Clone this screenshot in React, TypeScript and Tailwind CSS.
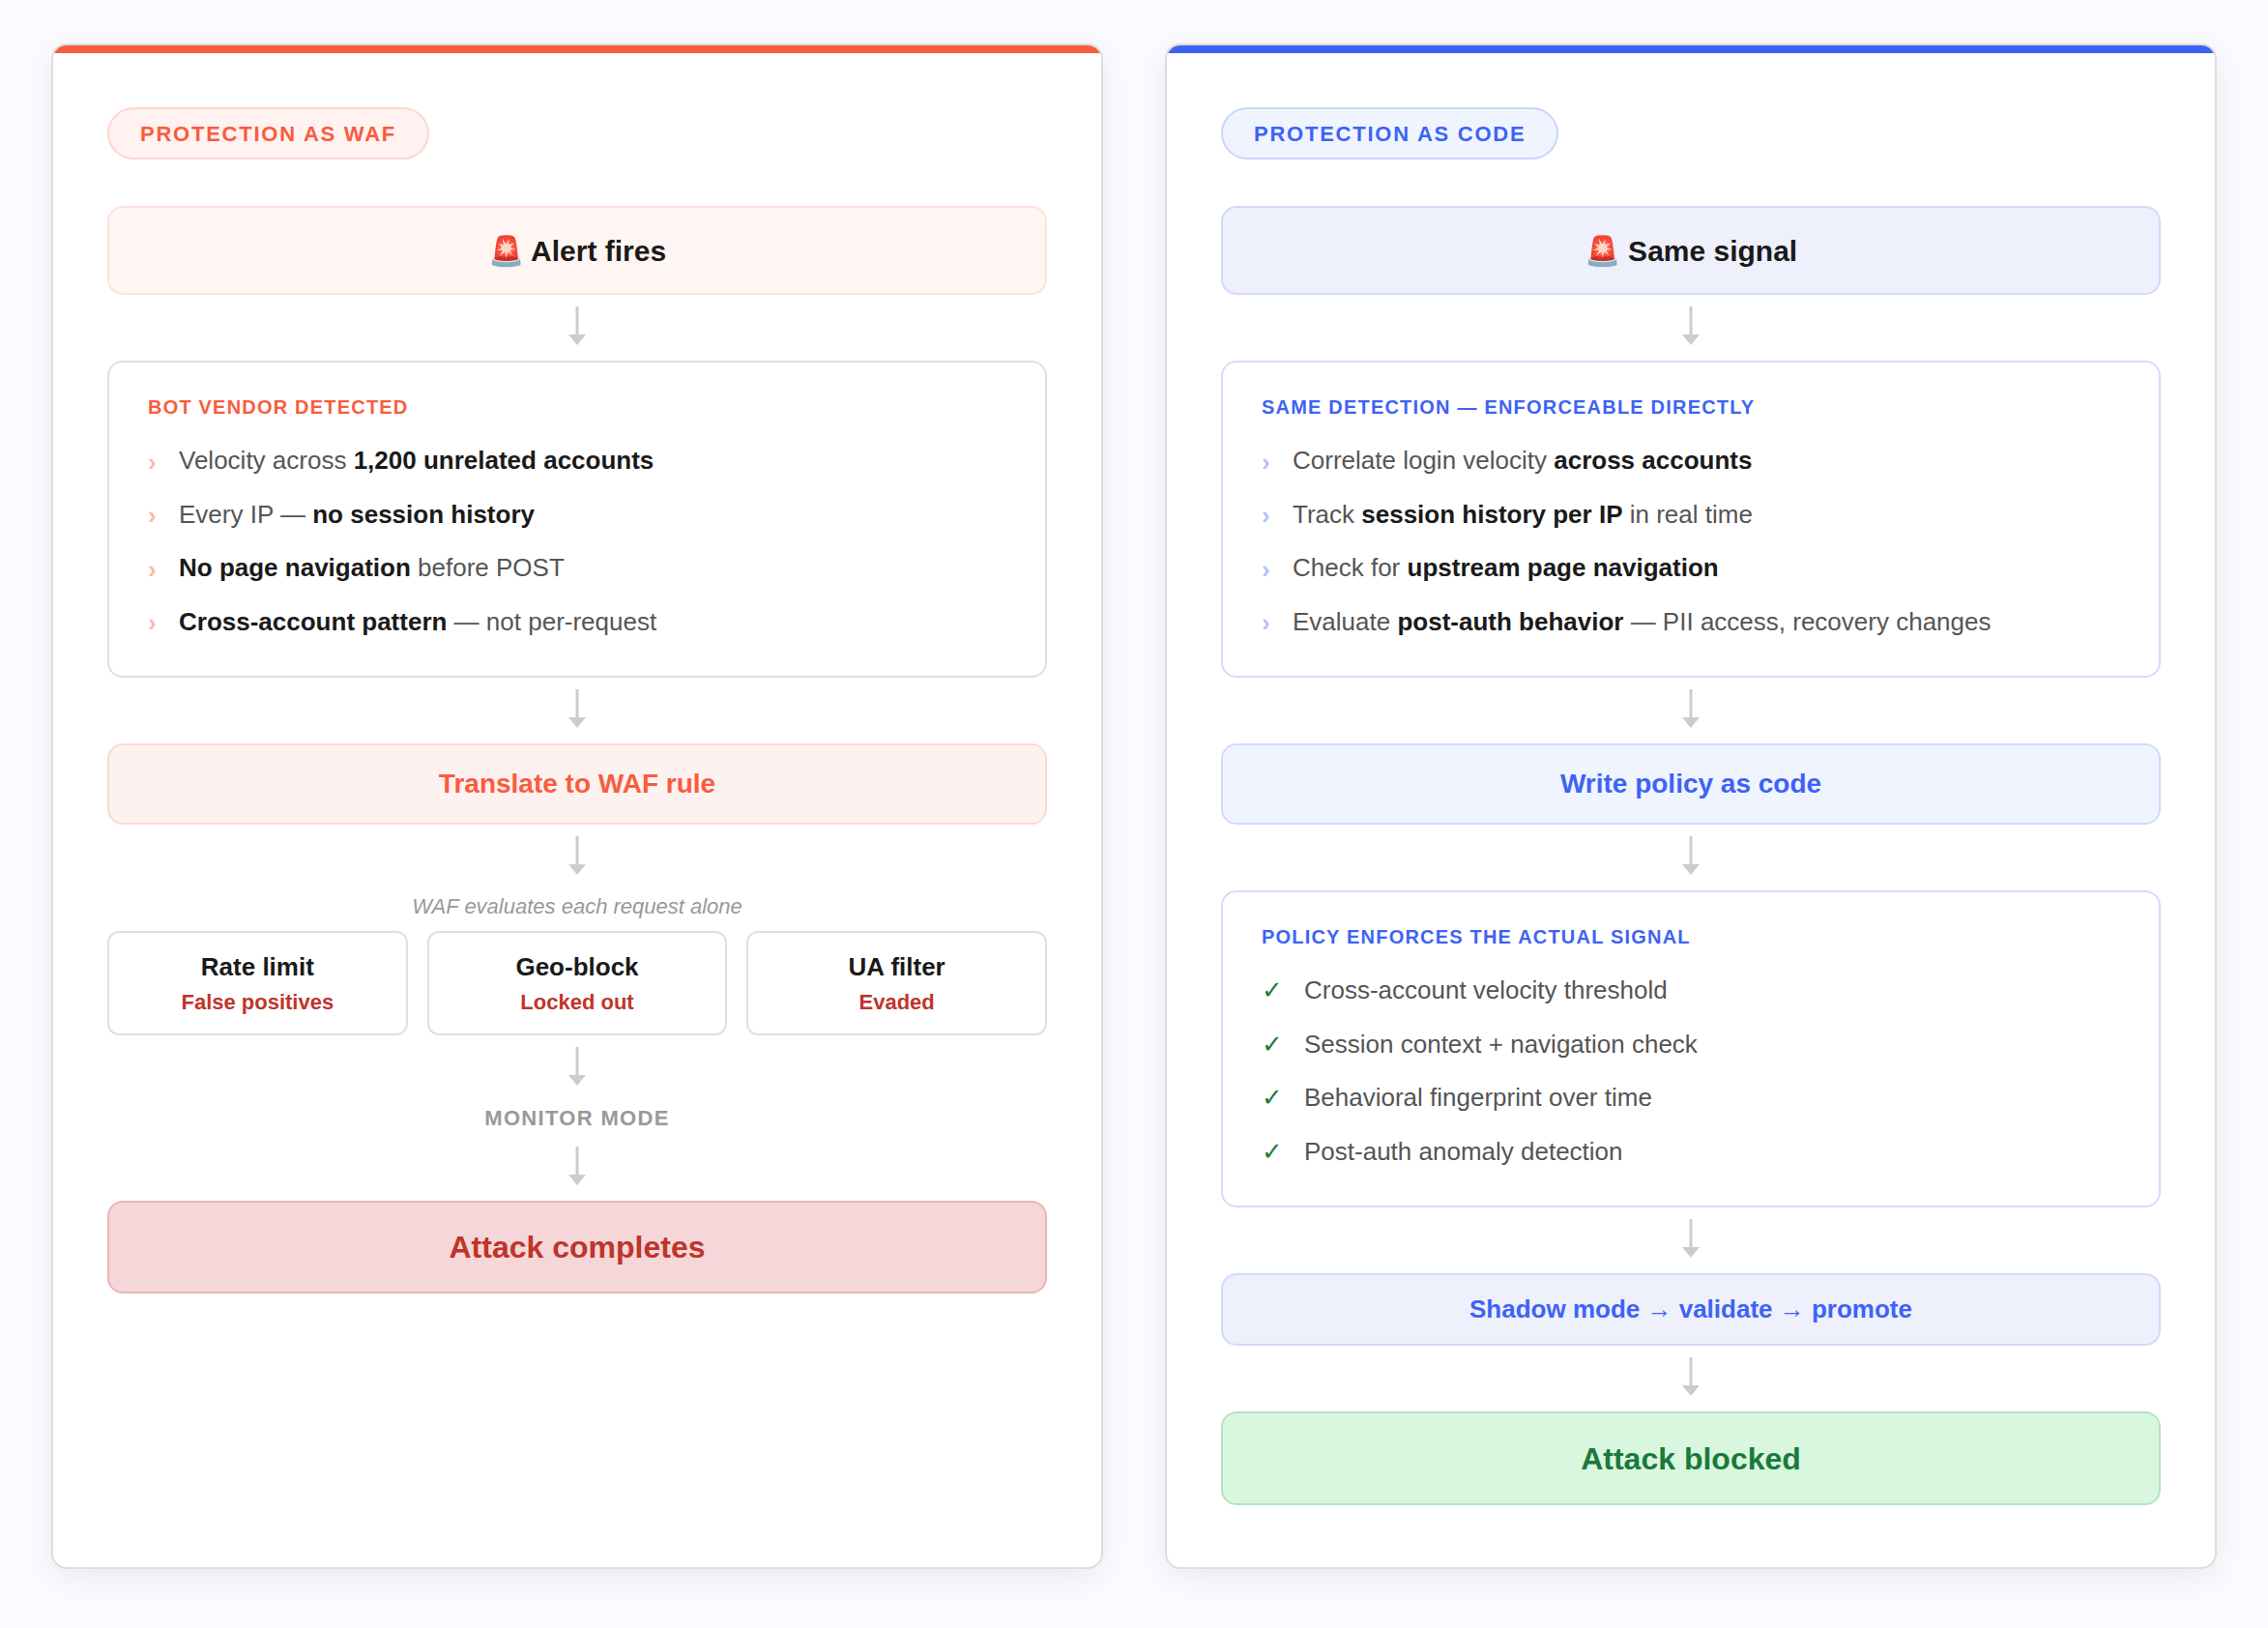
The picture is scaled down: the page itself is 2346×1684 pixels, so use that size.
import type { ReactNode } from "react";

function Arrow() {
  return (
    <svg width="18" height="40" viewBox="0 0 18 40" className="mt-[12px] mb-[16px] shrink-0 self-center">
      <rect x="7.5" y="0" width="3" height="30" fill="#cccccc" />
      <path d="M0 29h18l-9 11z" fill="#cccccc" />
    </svg>
  );
}

function Item({ children, chevron }: { children: ReactNode; chevron: string }) {
  return (
    <li className="flex h-[55.5px] items-center text-[26px] text-[#555555]">
      <span className={`w-[32px] shrink-0 pt-[3px] font-bold ${chevron}`}>›</span>
      <span>{children}</span>
    </li>
  );
}

function B({ children }: { children: ReactNode }) {
  return <strong className="font-bold text-[#1a1a1a]">{children}</strong>;
}

function Check({ children }: { children: ReactNode }) {
  return (
    <li className="flex h-[55.5px] items-center text-[26px] text-[#555555]">
      <span className="w-[44px] shrink-0 text-[#1a7a3a]">✓</span>
      <span>{children}</span>
    </li>
  );
}

function WafOption({ name, result }: { name: string; result: string }) {
  return (
    <div className="flex h-[108px] flex-col items-center justify-center rounded-[12px] border-2 border-[#e0e0e0] bg-white">
      <div className="text-[26px] leading-[36px] font-bold text-[#1a1a1a]">{name}</div>
      <div className="mt-[4px] text-[22px] leading-[30px] font-bold text-[#c0342a]">{result}</div>
    </div>
  );
}

export default function App() {
  return (
    <div className="min-h-[1684px] bg-[#fafbff] px-[53px] pt-[45px] pb-[62px] font-['Liberation_Sans',sans-serif]">
      <div className="grid grid-cols-2 gap-[64px]">
        {/* left: WAF */}
        <section className="relative flex h-[1578px] flex-col overflow-hidden rounded-[16px] border-2 border-[#dddddd] bg-white px-[56px] pt-[64px] shadow-[0_8px_32px_rgba(0,0,0,0.07)]">
          <div className="absolute inset-x-0 top-0 h-[8px] bg-[#f95c3d]" />
          <div className="mb-[48px] flex h-[54px] items-center self-start rounded-full border-2 border-[#fdd5cf] bg-[#fff2f0] px-[32px] text-[22px] font-bold tracking-[0.08em] text-[#f95c3d]">
            PROTECTION AS WAF
          </div>
          <div className="flex h-[92px] items-center justify-center rounded-[16px] border-2 border-[#ffe1dc] bg-[#fff5f3] text-[30px] font-bold whitespace-pre text-[#1a1a1a]">
            🚨 Alert fires
          </div>
          <Arrow />
          <div className="h-[328px] rounded-[16px] border-2 border-[#e0e0e0] bg-white px-[40px] pt-[32px]">
            <div className="mb-[14px] text-[20px] leading-[28px] font-bold tracking-[0.06em] text-[#f95c3d]">BOT VENDOR DETECTED</div>
            <ul>
              <Item chevron="text-[#fbb9ac]">Velocity across <B>1,200 unrelated accounts</B></Item>
              <Item chevron="text-[#fbb9ac]">Every IP — <B>no session history</B></Item>
              <Item chevron="text-[#fbb9ac]"><B>No page navigation</B> before POST</Item>
              <Item chevron="text-[#fbb9ac]"><B>Cross-account pattern</B> — not per-request</Item>
            </ul>
          </div>
          <Arrow />
          <div className="flex h-[84px] items-center justify-center rounded-[16px] border-2 border-[#fdd9d3] bg-[#fef2f0] text-[28px] font-bold text-[#f95c3d]">
            Translate to WAF rule
          </div>
          <Arrow />
          <p className="mb-[8px] text-center text-[22px] leading-[34px] text-[#999999] italic">WAF evaluates each request alone</p>
          <div className="grid grid-cols-3 gap-[20px]">
            <WafOption name="Rate limit" result="False positives" />
            <WafOption name="Geo-block" result="Locked out" />
            <WafOption name="UA filter" result="Evaded" />
          </div>
          <Arrow />
          <p className="text-center text-[22px] leading-[35px] font-bold tracking-[0.06em] text-[#999999]">MONITOR MODE</p>
          <Arrow />
          <div className="flex h-[96px] items-center justify-center rounded-[16px] border-2 border-[#eeb4b4] bg-[#f5d7d9] text-[32px] font-bold text-[#c0342a]">
            Attack completes
          </div>
        </section>

        {/* right: code */}
        <section className="relative flex h-[1578px] flex-col overflow-hidden rounded-[16px] border-2 border-[#dddddd] bg-white px-[56px] pt-[64px] shadow-[0_8px_32px_rgba(0,0,0,0.07)]">
          <div className="absolute inset-x-0 top-0 h-[8px] bg-[#3d63f5]" />
          <div className="mb-[48px] flex h-[54px] items-center self-start rounded-full border-2 border-[#c9d6fb] bg-[#f0f4ff] px-[32px] text-[22px] font-bold tracking-[0.08em] text-[#3d63f5]">
            PROTECTION AS CODE
          </div>
          <div className="flex h-[92px] items-center justify-center rounded-[16px] border-2 border-[#d3dafa] bg-[#eef0fc] text-[30px] font-bold whitespace-pre text-[#1a1a1a]">
            🚨 Same signal
          </div>
          <Arrow />
          <div className="h-[328px] rounded-[16px] border-2 border-[#d3dcfa] bg-white px-[40px] pt-[32px]">
            <div className="mb-[14px] text-[20px] leading-[28px] font-bold tracking-[0.06em] text-[#3d63f5]">SAME DETECTION — ENFORCEABLE DIRECTLY</div>
            <ul>
              <Item chevron="text-[#b4c3f8]">Correlate login velocity <B>across accounts</B></Item>
              <Item chevron="text-[#b4c3f8]">Track <B>session history per IP</B> in real time</Item>
              <Item chevron="text-[#b4c3f8]">Check for <B>upstream page navigation</B></Item>
              <Item chevron="text-[#b4c3f8]">Evaluate <B>post-auth behavior</B> — PII access, recovery changes</Item>
            </ul>
          </div>
          <Arrow />
          <div className="flex h-[84px] items-center justify-center rounded-[16px] border-2 border-[#d0dbfb] bg-[#f0f4fe] text-[28px] font-bold text-[#3d63f5]">
            Write policy as code
          </div>
          <Arrow />
          <div className="h-[328px] rounded-[16px] border-2 border-[#d3dcfa] bg-white px-[40px] pt-[32px]">
            <div className="mb-[14px] text-[20px] leading-[28px] font-bold tracking-[0.06em] text-[#3d63f5]">POLICY ENFORCES THE ACTUAL SIGNAL</div>
            <ul>
              <Check>Cross-account velocity threshold</Check>
              <Check>Session context + navigation check</Check>
              <Check>Behavioral fingerprint over time</Check>
              <Check>Post-auth anomaly detection</Check>
            </ul>
          </div>
          <Arrow />
          <div className="flex h-[75px] items-center justify-center rounded-[16px] border-2 border-[#d3dafa] bg-[#eef0fc] text-[26px] font-bold text-[#3d63f5]">
            Shadow mode → validate → promote
          </div>
          <Arrow />
          <div className="flex h-[97px] items-center justify-center rounded-[16px] border-2 border-[#b4e3c0] bg-[#d9f7df] text-[32px] font-bold text-[#1a7a3a]">
            Attack blocked
          </div>
        </section>
      </div>
    </div>
  );
}
